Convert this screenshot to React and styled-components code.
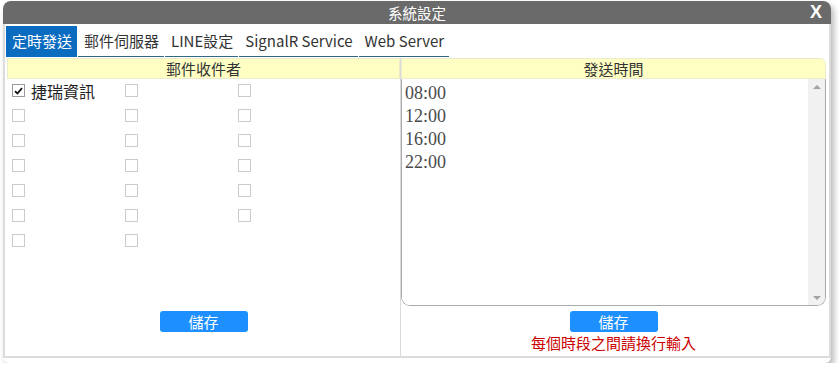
import React from 'react';
import styled, { createGlobalStyle } from 'styled-components';

const GlobalStyle = createGlobalStyle`
  body {
    margin: 0;
    background: #ffffff;
    font-family: "Noto Sans", "Noto Sans CJK TC", sans-serif;
  }
`;

const Dialog = styled.div`
  width: 828px;
  margin: 1px 0 0 3px;
  background: #fff;
  border-radius: 8px 8px 6px 6px;
  box-shadow: 3px 4px 6px rgba(0, 0, 0, 0.28);
  padding-bottom: 5px;
`;

const TitleBar = styled.div`
  position: relative;
  height: 23px;
  background: #6a6a6a;
  border-radius: 8px 8px 0 0;
  color: #fff;
  display: flex;
  align-items: center;
  justify-content: center;
  font-size: 14.5px;
  font-family: "Noto Sans CJK TC", sans-serif;
`;

const Close = styled.span`
  position: absolute;
  right: 9px;
  top: 1px;
  font-family: "Liberation Sans", sans-serif;
  font-weight: bold;
  font-size: 18px;
`;

const Body = styled.div`
  border: 2px solid #dcdcdc;
  border-top: none;
  padding: 2px 3px 0 1px;
`;

const Tabs = styled.div`
  display: flex;
  height: 31px;
`;

const Tab = styled.div`
  display: flex;
  align-items: center;
  padding: 0 5px 1px 6px;
  margin-right: 1px;
  font-size: 15px;
  font-family: "Noto Sans CJK TC", sans-serif;
  color: ${(p) => (p.$active ? '#fff' : '#333')};
  background: ${(p) => (p.$active ? '#0b6cbf' : 'transparent')};
  border-bottom: 1px solid ${(p) => (p.$active ? '#0b6cbf' : '#2f6a82')};
`;

const Content = styled.div`
  display: grid;
  grid-template-columns: 394px 1fr;
  margin: 1px 0 0 1px;
`;

const Panel = styled.div`
  display: grid;
  grid-template-rows: 21px 227px 50px;
  border-right: ${(p) => (p.$divider ? '1px solid #dadada' : 'none')};
`;

const Header = styled.div`
  background: #ffffc4;
  border: 1px solid #ececcc;
  border-radius: ${(p) => (p.$round ? '0 6px 0 0' : '0')};
  display: flex;
  align-items: center;
  justify-content: center;
  font-size: 15px;
  color: #333;
  font-family: "Noto Sans CJK TC", sans-serif;
`;

const CheckGrid = styled.div`
  display: grid;
  grid-template-columns: 113px 113px 113px;
  grid-auto-rows: 25px;
  align-items: start;
  padding: 5px 0 0 5px;
`;

const CheckItem = styled.label`
  display: flex;
  align-items: center;
  height: 13px;
  gap: 6px;
  font-size: 16px;
  color: #222;
  font-family: "Noto Sans CJK TC", sans-serif;
`;

const Box = styled.span`
  width: 11px;
  height: 11px;
  border: 1px solid ${(p) => (p.$checked ? '#9a9a9a' : '#cbcbcb')};
  background: #fff;
  display: flex;
  align-items: center;
  justify-content: center;
`;

const Footer = styled.div`
  display: flex;
  flex-direction: column;
  align-items: center;
  padding-top: 5px;
`;

const SaveButton = styled.button`
  width: 88px;
  height: 21px;
  border: none;
  border-radius: 3px;
  background: #1e8fff;
  color: #fff;
  font-size: 15px;
  padding: 0;
  font-family: "Noto Sans CJK TC", sans-serif;
  line-height: 21px;
`;

const Hint = styled.div`
  color: #cc0000;
  font-size: 15px;
  line-height: 21px;
  font-family: "Noto Sans CJK TC", sans-serif;
`;

const TextBox = styled.div`
  display: flex;
  border: 1px solid #ababab;
  border-top: none;
  border-radius: 0 0 9px 9px;
  overflow: hidden;
`;

const TimeArea = styled.textarea`
  flex: 1;
  border: none;
  outline: none;
  resize: none;
  overflow: hidden;
  padding: 3px 3px;
  margin: 0;
  font-family: "Liberation Serif", serif;
  font-size: 18px;
  line-height: 23px;
  color: #4a4a4a;
  background: #fff;
`;

const ScrollBar = styled.div`
  width: 17px;
  background: #f1f1f1;
  display: flex;
  flex-direction: column;
  justify-content: space-between;
  align-items: center;
  padding: 6px 0 5px;
`;

const Arrow = styled.span`
  width: 0;
  height: 0;
  border-left: 4px solid transparent;
  border-right: 4px solid transparent;
  ${(p) => (p.$down ? 'border-top: 4px solid #a3a3a3;' : 'border-bottom: 4px solid #a3a3a3;')}
`;

const tabs = ['定時發送', '郵件伺服器', 'LINE設定', 'SignalR Service', 'Web Server'];

const recipients = [
  { checked: true, label: '捷瑞資訊' },
  ...Array.from({ length: 19 }, () => ({ checked: false, label: '' })),
];

function Check({ checked }) {
  return (
    <Box $checked={checked}>
      {checked && (
        <svg width="9" height="8" viewBox="0 0 9 8">
          <path d="M1 4.2 L3.4 6.5 L8 1.2" fill="none" stroke="#111" strokeWidth="1.8" />
        </svg>
      )}
    </Box>
  );
}

export default function App() {
  return (
    <>
      <GlobalStyle />
      <Dialog>
        <TitleBar>
          系統設定
          <Close>X</Close>
        </TitleBar>
        <Body>
          <Tabs>
            {tabs.map((t, i) => (
              <Tab key={t} $active={i === 0}>{t}</Tab>
            ))}
          </Tabs>
          <Content>
            <Panel $divider>
              <Header>郵件收件者</Header>
              <CheckGrid>
                {recipients.map((r, i) => (
                  <CheckItem key={i}>
                    <Check checked={r.checked} />
                    {r.label}
                  </CheckItem>
                ))}
              </CheckGrid>
              <Footer>
                <SaveButton>儲存</SaveButton>
              </Footer>
            </Panel>
            <Panel>
              <Header $round>發送時間</Header>
              <TextBox>
                <TimeArea readOnly defaultValue={'08:00\n12:00\n16:00\n22:00'} />
                <ScrollBar>
                  <Arrow />
                  <Arrow $down />
                </ScrollBar>
              </TextBox>
              <Footer>
                <SaveButton>儲存</SaveButton>
                <Hint>每個時段之間請換行輸入</Hint>
              </Footer>
            </Panel>
          </Content>
        </Body>
      </Dialog>
    </>
  );
}
